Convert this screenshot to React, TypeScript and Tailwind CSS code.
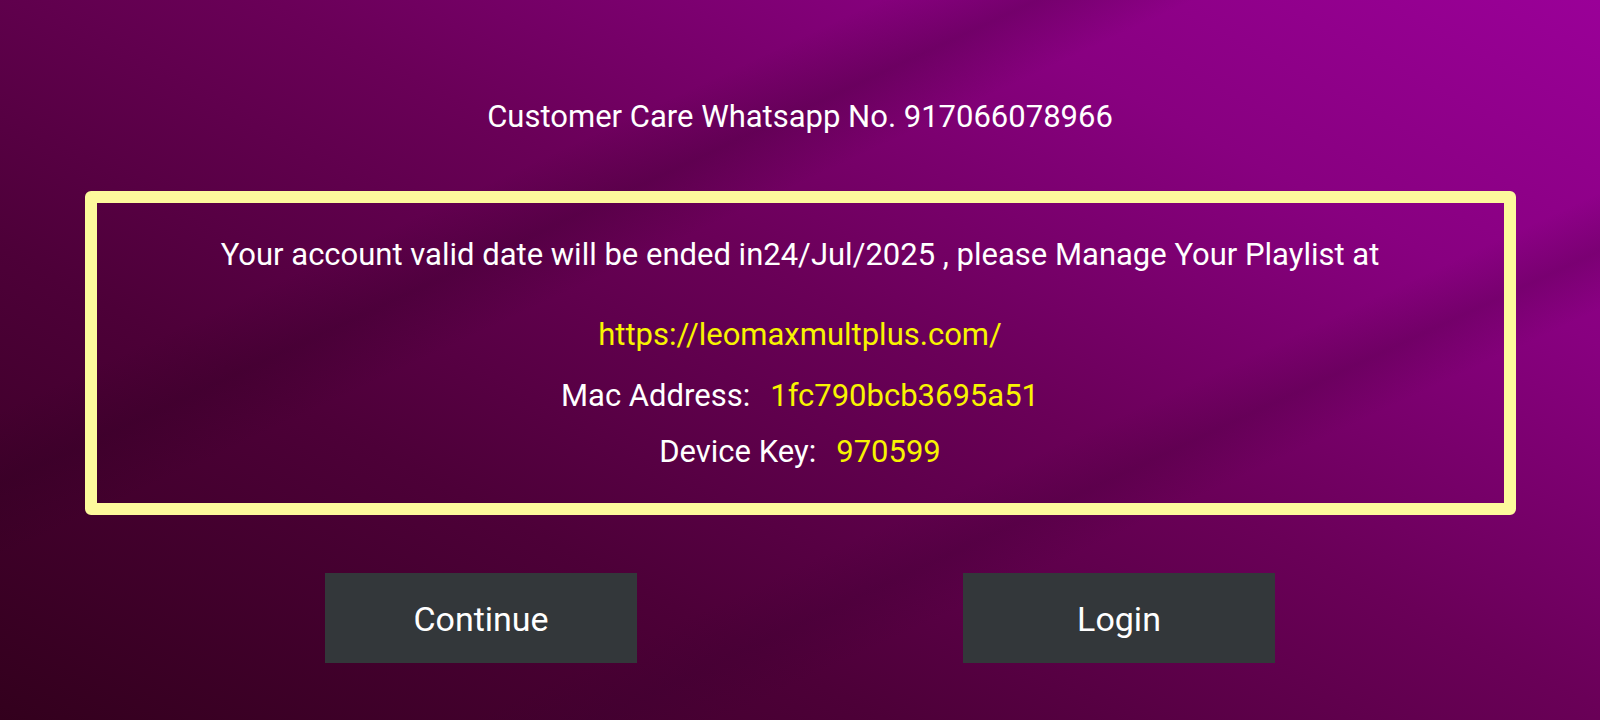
import React from 'react';

function App() {
  return (
    <div className="h-[720px] w-full overflow-hidden flex flex-col items-center font-['Roboto',_'Liberation_Sans',_sans-serif] text-white bg-[linear-gradient(155deg,transparent_28%,rgba(40,0,30,0.22)_33%,transparent_38%,transparent_64%,rgba(60,0,50,0.22)_68%,transparent_72%),linear-gradient(28deg,#33001d_0%,#4d0038_30%,#6a0058_55%,#880080_78%,#9a0098_100%)]">
      {/* Header */}
      <p className="mt-[99px] text-[31px] leading-[36px]">Customer Care Whatsapp No. 917066078966</p>

      {/* Notice box */}
      <div className="mt-[56px] w-[1431px] h-[324px] border-[12px] border-[#fdf99c] rounded-[6px] flex flex-col items-center text-[31px] leading-[36px]">
        <p className="mt-[34px]">Your account valid date will be ended in24/Jul/2025 , please Manage Your Playlist at</p>
        <p className="mt-[44px] text-[#f8f400]">https://leomaxmultplus.com/</p>
        <div className="mt-[25px] flex gap-5">
          <span>Mac Address:</span>
          <span className="text-[#f8f400]">1fc790bcb3695a51</span>
        </div>
        <div className="mt-[20px] flex gap-5">
          <span>Device Key:</span>
          <span className="text-[#f8f400]">970599</span>
        </div>
      </div>

      {/* Actions */}
      <div className="mt-[58px] flex gap-[326px]">
        <button className="w-[312px] h-[90px] pt-[2px] bg-[#33373a] text-[34px] text-white">Continue</button>
        <button className="w-[312px] h-[90px] pt-[2px] bg-[#33373a] text-[34px] text-white">Login</button>
      </div>
    </div>
  );
}

export default App;
